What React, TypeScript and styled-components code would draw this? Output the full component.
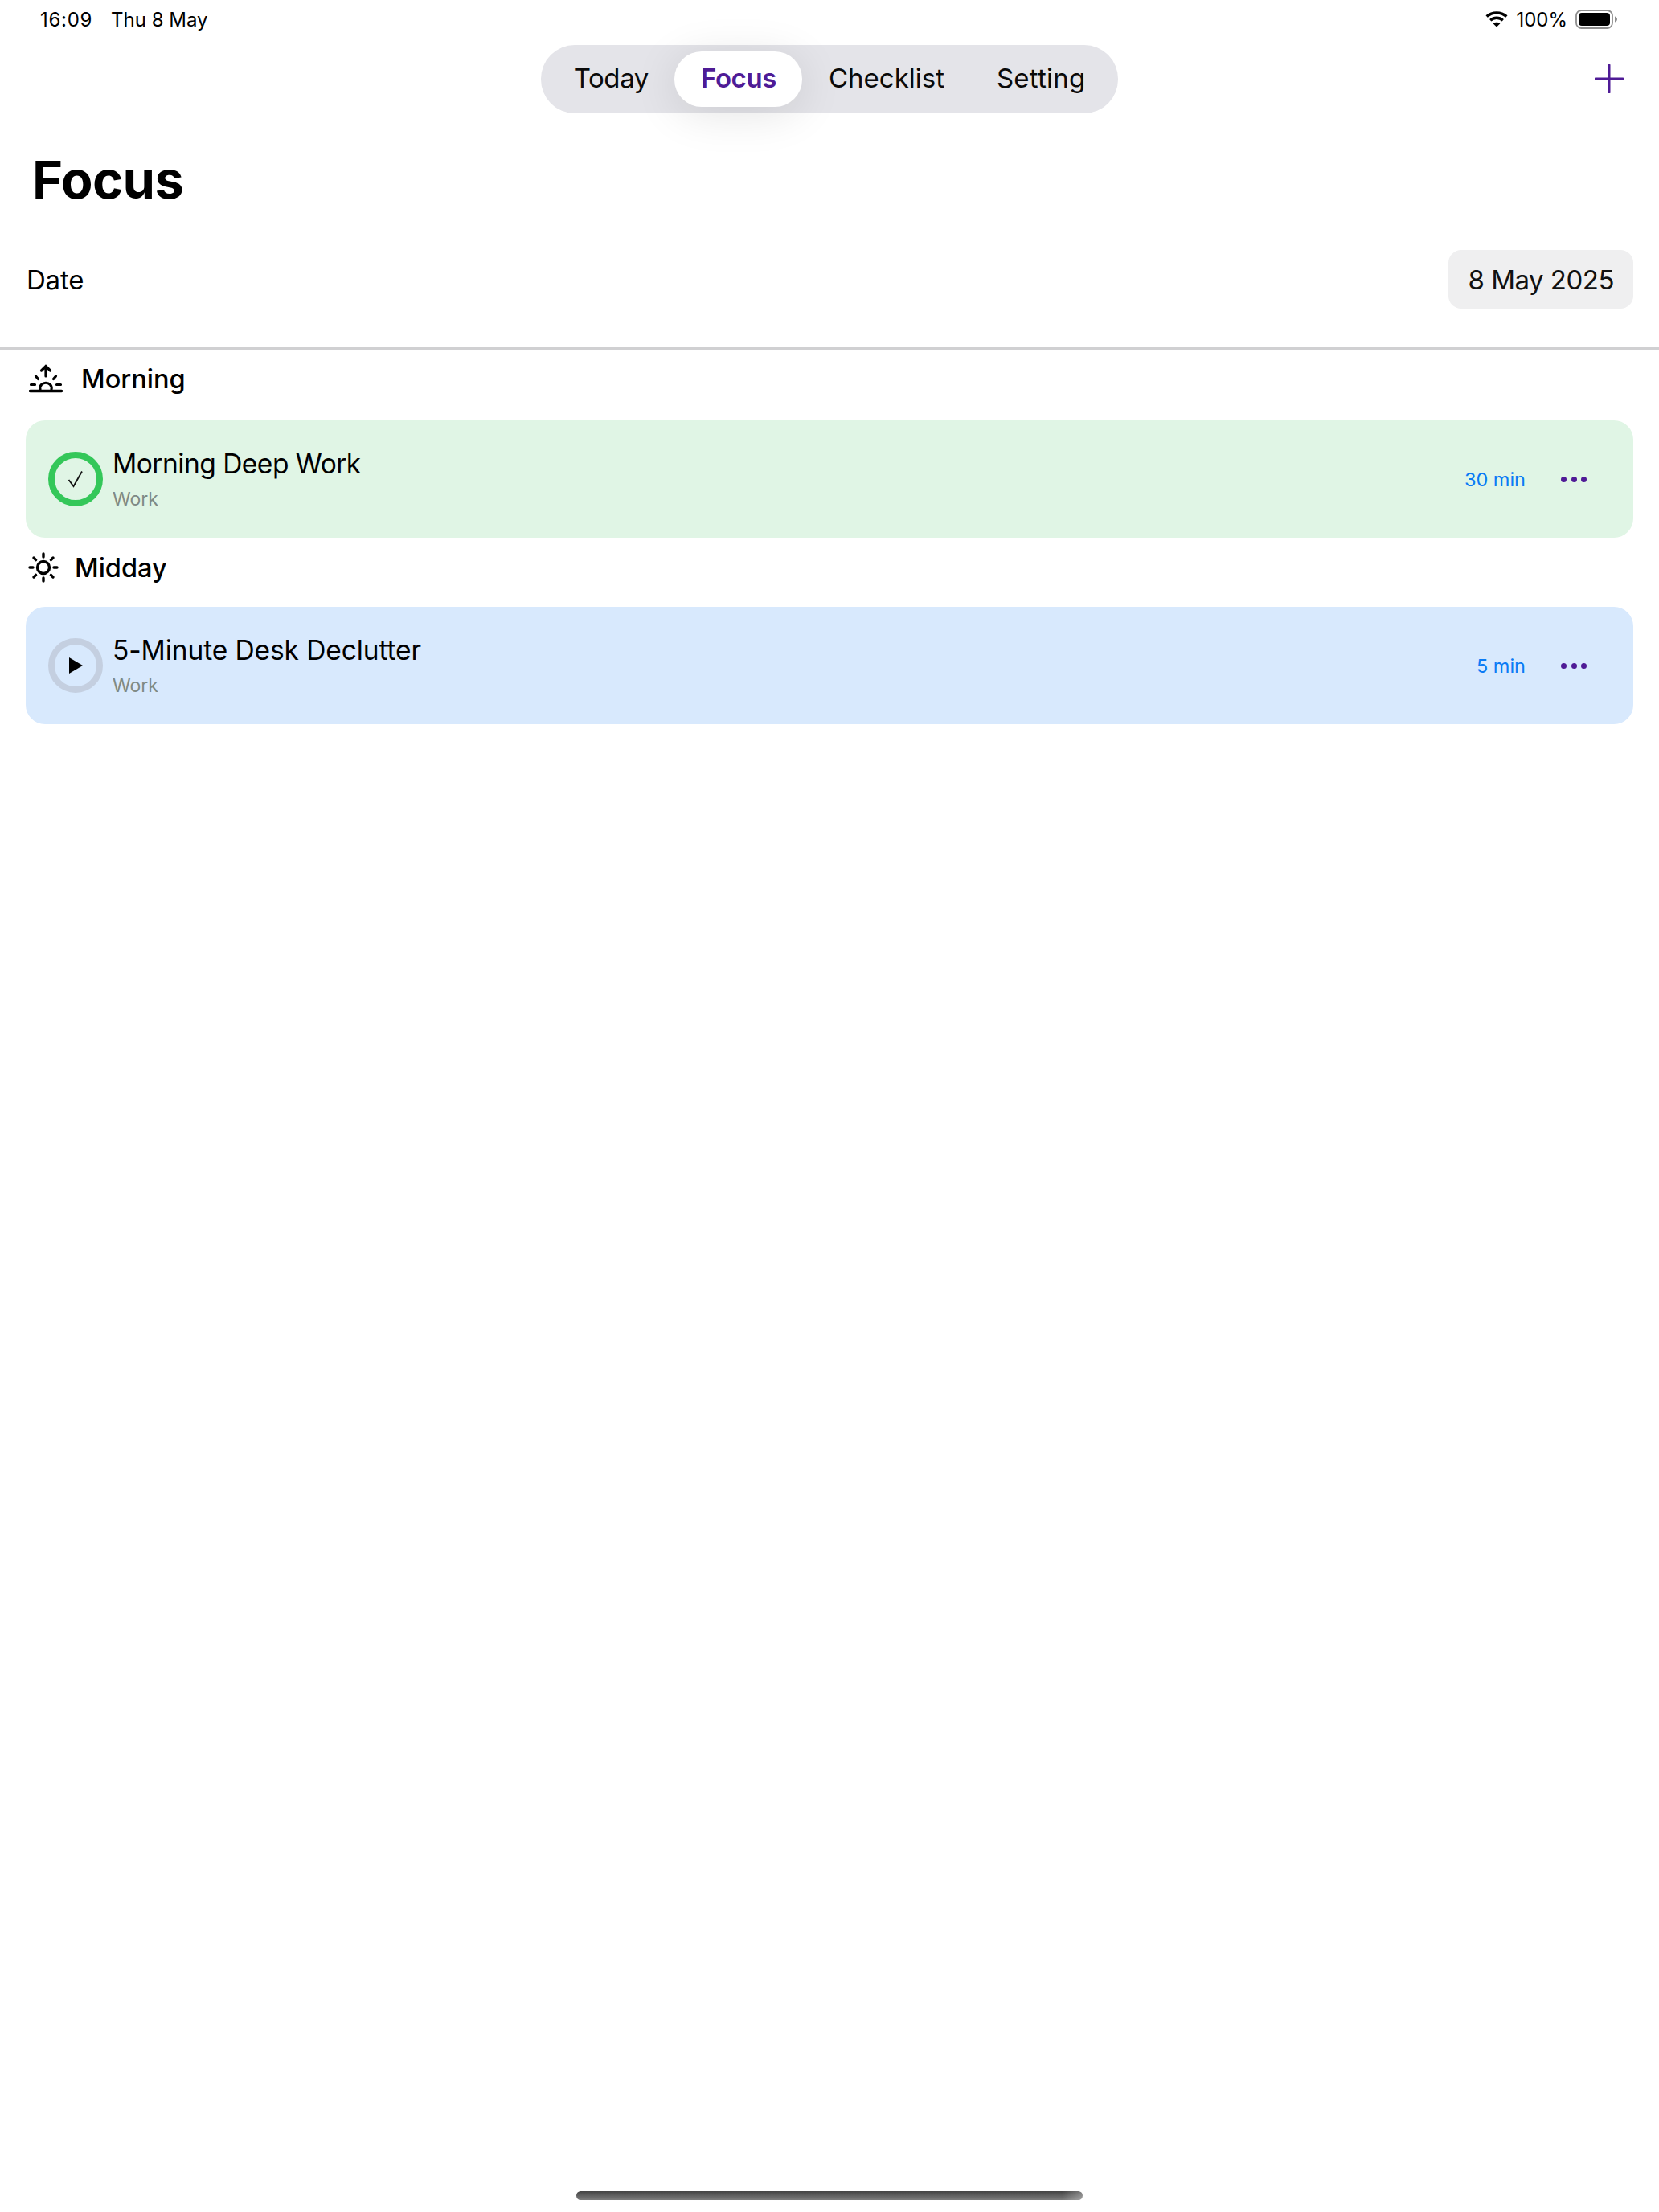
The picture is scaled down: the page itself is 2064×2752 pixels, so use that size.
import styled, { createGlobalStyle } from "styled-components";

const GlobalStyle = createGlobalStyle`
  html, body {
    margin: 0;
    padding: 0;
    background: #fff;
    font-family: Inter, "Liberation Sans", sans-serif;
    color: #000;
  }
`;

const PURPLE = "#4f1b96";

const Page = styled.div`
  display: flex;
  flex-direction: column;
  width: 2064px;
  height: 2752px;
  overflow: hidden;
`;

const StatusBar = styled.div`
  display: flex;
  align-items: center;
  justify-content: space-between;
  height: 48px;
  padding: 0 50px;
  font-size: 24px;
`;

const StatusLeft = styled.div`
  display: flex;
  gap: 23px;
`;

const StatusTime = styled.span`
  letter-spacing: 0.7px;
`;

const StatusRight = styled.div`
  display: flex;
  align-items: center;
  gap: 10px;
`;

const Header = styled.header`
  display: grid;
  grid-template-columns: 1fr auto 1fr;
  align-items: center;
  margin-top: 8px;
`;

const Segments = styled.nav`
  grid-column: 2;
  display: flex;
  padding: 8px;
  border-radius: 42px;
  background: #e4e4e9;
`;

const Segment = styled.div<{ $active?: boolean; $tracking: number }>`
  height: 66px;
  padding: 0 32.5px 3px;
  display: flex;
  align-items: center;
  border-radius: 34px;
  font-size: 33px;
  font-weight: ${(p) => (p.$active ? 600 : 400)};
  letter-spacing: ${(p) => p.$tracking}px;
  color: ${(p) => (p.$active ? PURPLE : "#0a0a0a")};
  background: ${(p) => (p.$active ? "#fff" : "transparent")};
  box-shadow: ${(p) => (p.$active ? "0 8px 56px rgba(0, 0, 0, 0.11)" : "none")};
`;

const AddButton = styled.div`
  grid-column: 3;
  justify-self: end;
  display: flex;
  margin: 0 44px 2px 0;
`;

const Title = styled.h1`
  margin: 42px 0 0 40px;
  font-size: 65px;
  line-height: 82px;
  font-weight: 700;
  letter-spacing: -0.6px;
`;

const DateRow = styled.div`
  display: flex;
  align-items: center;
  justify-content: space-between;
  margin-top: 46px;
  padding: 0 32px 0 33px;
  font-size: 33px;
`;

const DateLabel = styled.span`
  letter-spacing: -0.2px;
`;

const DatePill = styled.div`
  display: flex;
  align-items: center;
  height: 73px;
  padding: 0 24px;
  border-radius: 16px;
  background: #efeff0;
  font-size: 33px;
  letter-spacing: -0.5px;
  color: #111;
`;

const Divider = styled.hr`
  margin: 48px 0 0;
  border: 0;
  height: 3px;
  background: #d0d0d2;
`;

const SectionHead = styled.div<{ $gap: number; $top: number; $bottom: number }>`
  display: flex;
  align-items: center;
  gap: ${(p) => p.$gap}px;
  height: 44px;
  margin: ${(p) => p.$top}px 0 ${(p) => p.$bottom}px;
  padding-left: 35px;
  font-size: 32.5px;
  font-weight: 500;
`;

const Card = styled.div<{ $bg: string }>`
  display: flex;
  align-items: center;
  height: 146px;
  margin: 0 32px;
  padding: 0 58px 0 28px;
  border-radius: 24px;
  background: ${(p) => p.$bg};
`;

const Ring = styled.div<{ $color: string }>`
  flex: none;
  display: flex;
  align-items: center;
  justify-content: center;
  box-sizing: border-box;
  width: 68px;
  height: 68px;
  border: 8px solid ${(p) => p.$color};
  border-radius: 50%;
`;

const CardText = styled.div`
  flex: 1;
  display: flex;
  flex-direction: column;
  gap: 8px;
  margin-left: 12px;
`;

const CardTitle = styled.div<{ $tracking: number }>`
  font-size: 33.5px;
  line-height: 42px;
  letter-spacing: ${(p) => p.$tracking}px;
`;

const CardSub = styled.div`
  font-size: 23px;
  line-height: 30px;
  color: #7f8a85;
`;

const Duration = styled.div`
  font-size: 23.5px;
  color: #0a7bf5;
`;

const Dots = styled.div`
  display: flex;
  gap: 5.5px;
  margin-left: 44px;
`;

const Dot = styled.span`
  width: 7px;
  height: 7px;
  border-radius: 50%;
  background: ${PURPLE};
`;

const HomeBar = styled.div`
  align-self: center;
  width: 630px;
  height: 11px;
  margin: auto 0 15px;
  border-radius: 6px;
  background: linear-gradient(90deg, rgba(255, 255, 255, 0) 96%, rgba(255, 255, 255, 0.3)),
    linear-gradient(180deg, #434343, #7d7d7d);
`;

const Wifi = () => (
  <svg width="28" height="20" viewBox="0 0 28 20" fill="none" stroke="#000" strokeWidth="3.4">
    <path d="M1.6 6.6C8.6 0.4 19.4 0.4 26.4 6.6" />
    <path d="M6.2 11.2C10.8 7.2 17.2 7.2 21.8 11.2" />
    <path d="M14 19.6L9.6 15.2C12 13.2 16 13.2 18.4 15.2Z" fill="#000" stroke="none" />
  </svg>
);

const Battery = () => (
  <svg width="54" height="24" viewBox="0 0 54 24">
    <rect x="1" y="1" width="45" height="22" rx="6.5" fill="none" stroke="#8e8e8e" strokeWidth="1.8" />
    <rect x="4" y="4" width="39" height="16" rx="4" fill="#000" />
    <path d="M49 8.5C51 9.2 52 10.4 52 12C52 13.6 51 14.8 49 15.5Z" fill="#8e8e8e" />
  </svg>
);

const Plus = () => (
  <svg width="36" height="36" viewBox="0 0 36 36" stroke={PURPLE} strokeWidth="3" strokeLinecap="round">
    <path d="M18 1V35M1 18H35" />
  </svg>
);

const Sunrise = () => (
  <svg width="44" height="36" viewBox="0 0 44 36" fill="none" stroke="#000" strokeWidth="3.2" strokeLinecap="round">
    <path d="M2.5 33.5H41.5" strokeWidth="3.6" />
    <path d="M15 31.5C13 20.5 31 20.5 29 31.5" />
    <path d="M22 15V2.5M16.5 8L22 2.5L27.5 8" />
    <path d="M3.5 25.5H8.5M35.5 25.5H40.5M9.5 15L12.5 18.5M34.5 15L31.5 18.5" />
  </svg>
);

const Sun = () => (
  <svg width="38" height="38" viewBox="0 0 38 38" fill="none" stroke="#000" strokeWidth="3.4" strokeLinecap="round">
    <circle cx="19" cy="19" r="7.5" />
    <path d="M19 2V6M19 32V36M2 19H6M32 19H36M7 7L9.6 9.6M28.4 28.4L31 31M7 31L9.6 28.4M28.4 9.6L31 7" />
  </svg>
);

const Check = () => (
  <svg width="24" height="24" viewBox="0 0 24 24" fill="none" stroke="#111" strokeWidth="1.8">
    <path d="M3.5 13L9.5 21L20 2.5" />
  </svg>
);

const Play = () => (
  <svg width="20" height="22" viewBox="0 0 20 22">
    <path d="M2 1L19 11L2 21Z" fill="#000" />
  </svg>
);

const tabs = [
  { label: "Today", tracking: -0.4 },
  { label: "Focus", tracking: -0.4, active: true },
  { label: "Checklist", tracking: 0 },
  { label: "Setting", tracking: 0.2 },
];

const App = () => {
  return (
    <Page>
      <GlobalStyle />
      <StatusBar>
        <StatusLeft>
          <StatusTime>16:09</StatusTime>
          <span>Thu 8 May</span>
        </StatusLeft>
        <StatusRight>
          <Wifi />
          <span>100%</span>
          <Battery />
        </StatusRight>
      </StatusBar>

      <Header>
        <Segments>
          {tabs.map((tab) => (
            <Segment key={tab.label} $active={tab.active} $tracking={tab.tracking}>
              {tab.label}
            </Segment>
          ))}
        </Segments>
        <AddButton>
          <Plus />
        </AddButton>
      </Header>

      <Title>Focus</Title>

      <DateRow>
        <DateLabel>Date</DateLabel>
        <DatePill>8 May 2025</DatePill>
      </DateRow>
      <Divider />

      <SectionHead $gap={22} $top={14} $bottom={30}>
        <Sunrise />
        <span>Morning</span>
      </SectionHead>
      <Card $bg="#e0f5e5">
        <Ring $color="#34c759">
          <Check />
        </Ring>
        <CardText>
          <CardTitle $tracking={-0.5}>Morning Deep Work</CardTitle>
          <CardSub>Work</CardSub>
        </CardText>
        <Duration>30 min</Duration>
        <Dots>
          <Dot />
          <Dot />
          <Dot />
        </Dots>
      </Card>

      <SectionHead $gap={20} $top={15} $bottom={27}>
        <Sun />
        <span>Midday</span>
      </SectionHead>
      <Card $bg="#d8e9fd">
        <Ring $color="#c4cfe0">
          <Play />
        </Ring>
        <CardText>
          <CardTitle $tracking={-0.1}>5-Minute Desk Declutter</CardTitle>
          <CardSub>Work</CardSub>
        </CardText>
        <Duration>5 min</Duration>
        <Dots>
          <Dot />
          <Dot />
          <Dot />
        </Dots>
      </Card>

      <HomeBar />
    </Page>
  );
};

export default App;
